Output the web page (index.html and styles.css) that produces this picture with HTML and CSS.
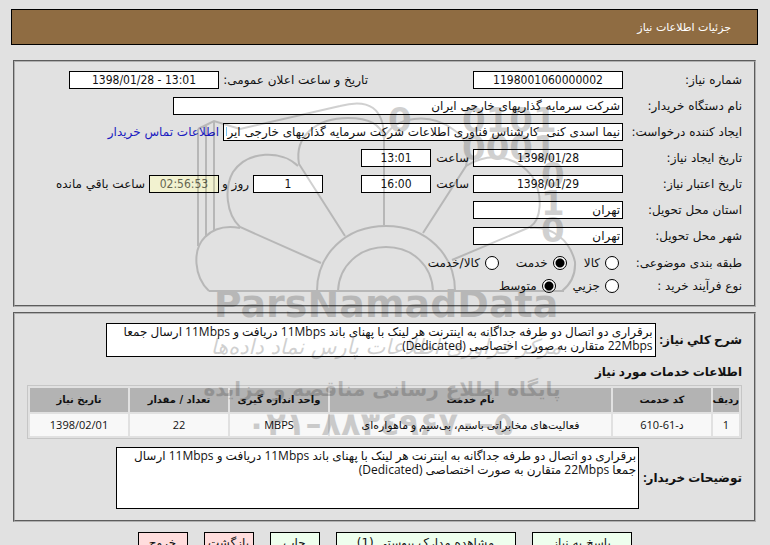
FILE: index.html
```
<!DOCTYPE html>
<html lang="fa" dir="rtl">
<head>
<meta charset="utf-8">
<title>جزئیات اطلاعات نیاز</title>
<link rel="stylesheet" href="styles.css">
</head>
<body>
<header class="title-bar"><h1>جزئیات اطلاعات نیاز</h1></header>
<main class="content">
  <section class="panel details">
    <div class="row">
      <label class="name" for="num">شماره نیاز:</label>
      <input class="box wide" id="num" value="1198001060000002">
      <span class="push"></span>
      <label class="announce" for="ann">تاریخ و ساعت اعلان عمومی:</label>
      <input class="box wide" id="ann" dir="ltr" value="1398/01/28 - 13:01">
    </div>
    <div class="row">
      <label class="name" for="org">نام دستگاه خریدار:</label>
      <input class="box org" id="org" value="شرکت سرمایه گذاریهای خارجی ایران">
    </div>
    <div class="row">
      <label class="name" for="creator">ایجاد کننده درخواست:</label>
      <input class="box creator" id="creator" value="نیما اسدی کنی  کارشناس فناوری اطلاعات شرکت سرمایه گذاریهای خارجی ایران">
      <a href="#contact">اطلاعات تماس خریدار</a>
    </div>
    <div class="row">
      <label class="name" for="cdate">تاریخ ایجاد نیاز:</label>
      <input class="box wide" id="cdate" value="1398/01/28">
      <label class="hour" for="ctime">ساعت</label>
      <input class="box small" id="ctime" value="13:01">
    </div>
    <div class="row">
      <label class="name" for="vdate">تاریخ اعتبار نیاز:</label>
      <input class="box wide" id="vdate" value="1398/01/29">
      <label class="hour" for="vtime">ساعت</label>
      <input class="box small" id="vtime" value="16:00">
      <input class="box small days" id="days" value="1" aria-label="روز">
      <label class="day" for="days">روز و</label>
      <input class="box small left" id="remain" value="02:56:53">
      <label for="remain">ساعت باقي مانده</label>
    </div>
    <div class="row">
      <label class="name" for="province">استان محل تحویل:</label>
      <input class="box wide text" id="province" value="تهران">
    </div>
    <div class="row last-field">
      <label class="name" for="city">شهر محل تحویل:</label>
      <input class="box wide text" id="city" value="تهران">
    </div>
    <div class="row choices" role="radiogroup" aria-label="طبقه بندی موضوعی">
      <span class="name">طبقه بندی موضوعی:</span>
      <label><input type="radio" name="kind">کالا</label>
      <label><input type="radio" name="kind" checked>خدمت</label>
      <label><input type="radio" name="kind">کالا/خدمت</label>
    </div>
    <div class="row choices" role="radiogroup" aria-label="نوع فرآیند خرید">
      <span class="name">نوع فرآیند خرید :</span>
      <label><input type="radio" name="process">جزیي</label>
      <label><input type="radio" name="process" checked>متوسط</label>
    </div>
  </section>
  <section class="panel services">
    <div class="note">
      <label for="desc">شرح کلي نیاز:</label>
      <textarea id="desc" class="desc">برقراری دو اتصال دو طرفه جداگانه به اینترنت هر لینک با پهنای باند 11Mbps دریافت و 11Mbps ارسال جمعا 22Mbps متقارن به صورت اختصاصی (Dedicated)</textarea>
    </div>
    <h2>اطلاعات خدمات مورد نیاز</h2>
    <table>
      <thead><tr><th class="c-row">ردیف</th><th class="c-std">کد خدمت</th><th>نام خدمت</th><th class="c-std">واحد اندازه گیری</th><th class="c-std">تعداد / مقدار</th><th class="c-std">تاریخ نیاز</th></tr></thead>
      <tbody><tr><td>1</td><td>د-61-610</td><td>فعالیت‌های مخابراتی باسیم، بی‌سیم و ماهواره‌ای</td><td>MBPS</td><td>22</td><td>1398/02/01</td></tr></tbody>
    </table>
    <div class="note">
      <label for="remarks">توضیحات خریدار:</label>
      <textarea id="remarks" class="remarks">برقراری دو اتصال دو طرفه جداگانه به اینترنت هر لینک با پهنای باند 11Mbps دریافت و 11Mbps ارسال جمعا 22Mbps متقارن به صورت اختصاصی (Dedicated)</textarea>
    </div>
  </section>
  <div class="actions">
    <button type="button" class="go w100">پاسخ به نیاز</button>
    <button type="button" class="go w180">مشاهده مدارک پیوستی (1)</button>
    <button type="button" class="go">چاپ</button>
    <button type="button" class="stop">بازگشت</button>
    <button type="button" class="stop">خروج</button>
  </div>
</main>
<svg class="watermark" viewBox="0 0 390 360" direction="ltr" aria-hidden="true">
  <g fill="none" stroke="#000" stroke-width="2">
    <path d="M8 39V156M16 36V147M24 32V141M8 39L24 31L50 39"/>
    <path d="M50 39L150 16Q194 4 194 48V135"/>
    <path d="M155 146L109 74C104 45 128 28 158 28Q190 28 194 48"/>
    <path d="M194 48C205 26 240 22 264 40Q282 52 276 76L233 143"/>
    <path d="M131 173L50 137C36 124 34 98 43 82C58 60 92 60 108 76"/>
    <path d="M276 76C302 60 328 68 342 86C354 106 351 130 340 137L262 170"/>
    <path d="M19 201C4 187 2 160 15 147Q28 134 50 138M340 138C362 136 380 150 385 172Q386 190 372 201M19 201H374"/>
    <path d="M127 201C127 165 155 136 196 136S265 165 265 201M148 201C149 176 169 157 196 157S242 176 243 201"/>
  </g>
  <g class="bits">
    <text x="198" y="42">0</text><text x="272" y="42">0101</text>
    <text x="272" y="70">0001</text><text x="351" y="97">0</text>
    <text x="351" y="125">1</text><text x="351" y="152">0</text>
  </g>
  <text class="brand" x="196" y="227">ParsNamadData</text>
  <text class="script" x="196" y="264">مرکز فرآوری اطلاعات پارس نماد داده‌ها</text>
  <text class="slogan" x="192" y="306">پایگاه اطلاع رسانی مناقصه و مزایده</text>
  <text class="phone" x="190" y="345">۰۲۱–۸۸۳٤۹۶۷۰–۵</text>
</svg>
</body>
</html>
```
FILE: styles.css
```
* { box-sizing: border-box; }
body {
  margin: 0;
  padding: 9px 12px 0 11px;
  overflow: hidden;
  position: relative;
  background: #e1e1e1;
  color: #111;
  font: 12px/16px "DejaVu Sans", Tahoma, sans-serif;
}
input, textarea, button { font: inherit; color: inherit; margin: 0; border-radius: 0; }
h1, h2 { margin: 0; }
.title-bar {
  height: 36px;
  padding: 2px 26px 0;
  display: flex;
  align-items: center;
  border: 1px solid #000;
  background: #8f6c42;
  color: #fff;
}
.title-bar h1 { font-size: 11px; font-weight: normal; }
.content { padding: 15px 2px 0; }
.panel { border: 2px groove #b0b0b0; }
.details { padding: 9px 12px 8px; }
.row { display: flex; align-items: center; height: 18px; margin-bottom: 8px; white-space: pre; }
.row .name { flex: 0 0 119px; }
.box {
  height: 18px;
  flex: none;
  padding: 0 2px;
  border: 1px solid #000;
  background: #fff;
  text-align: center;
  font-family: "DejaVu Sans Condensed", "DejaVu Sans", sans-serif;
}
.org, .creator, .text { text-align: right; font-family: "DejaVu Sans", sans-serif; }
.wide { width: 150px; }
.small { width: 70px; }
.org { width: 450px; }
.creator { width: 400px; }
.push { width: 105px; }
.announce { width: 149px; }
.row a { color: #1a1ac0; text-decoration: none; margin-right: 4px; }
.hour { width: 42px; padding-right: 4px; }
.days { margin-right: 38px; }
.day { width: 34px; padding-right: 4px; }
.left { background: #f2f2d0; color: #666650; margin-left: 4px; }
.last-field { margin-bottom: 6px; }
.choices { height: 23px; margin: 0; }
.choices label { display: flex; align-items: center; gap: 5px; margin-left: 13px; }
.choices input {
  appearance: none;
  width: 14px;
  height: 14px;
  margin-right: 4px;
  border: 1px solid #000;
  border-radius: 50%;
  background: #fff;
}
.choices input:checked { background: radial-gradient(circle, #000 4px, #fff 5px); }
.services { margin-top: 5px; padding: 9px 12px 11px; }
.note { display: flex; align-items: center; gap: 4px; }
.note label, h2 {
  font: bold 12px/16px "Open Sans", "DejaVu Sans", sans-serif;
  white-space: nowrap;
}
textarea {
  flex: none;
  display: block;
  border: 1px solid #000;
  background: #fff;
  padding: 1px 2px;
  font-family: "Open Sans", "DejaVu Sans", sans-serif;
  line-height: 14px;
  resize: none;
  overflow: hidden;
}
.desc { width: 550px; height: 34px; }
.remarks { width: 523px; height: 62px; }
h2 { margin: 7px 0 5px; }
table {
  width: 100%;
  table-layout: fixed;
  border: 1px solid #c6c6c6;
  border-spacing: 2px;
  margin-bottom: 8px;
}
th, td { padding: 0; text-align: center; white-space: nowrap; }
th { height: 24px; background: #b3b3b3; font-size: 10px; }
td { height: 22px; background: #f8f8f8; font-size: 11px; font-family: "Open Sans", "DejaVu Sans", sans-serif; }
.c-row { width: 26px; }
.c-std { width: 98px; }
.actions { display: flex; justify-content: center; gap: 16px; margin-top: 10px; }
.actions button { width: 50px; height: 21px; padding: 0; border: 1px solid #000; }
.actions .go { background: #eeffee; }
.actions .stop { background: #ffdddd; }
.actions .w100 { width: 100px; }
.actions .w180 { width: 180px; }
.watermark {
  position: absolute;
  left: 190px;
  top: 90px;
  width: 390px;
  height: 360px;
  opacity: 0.18;
  pointer-events: none;
}
.watermark text { font-family: "DejaVu Sans", sans-serif; font-weight: bold; }
.watermark .brand, .watermark .script, .watermark .slogan, .watermark .phone { text-anchor: middle; }
.watermark .bits text { font-size: 34px; }
.watermark .brand { font-size: 38px; }
.watermark .script { font-size: 21px; font-weight: normal; font-style: italic; }
.watermark .slogan { font-size: 20px; }
.watermark .phone { font-size: 32px; }
```
